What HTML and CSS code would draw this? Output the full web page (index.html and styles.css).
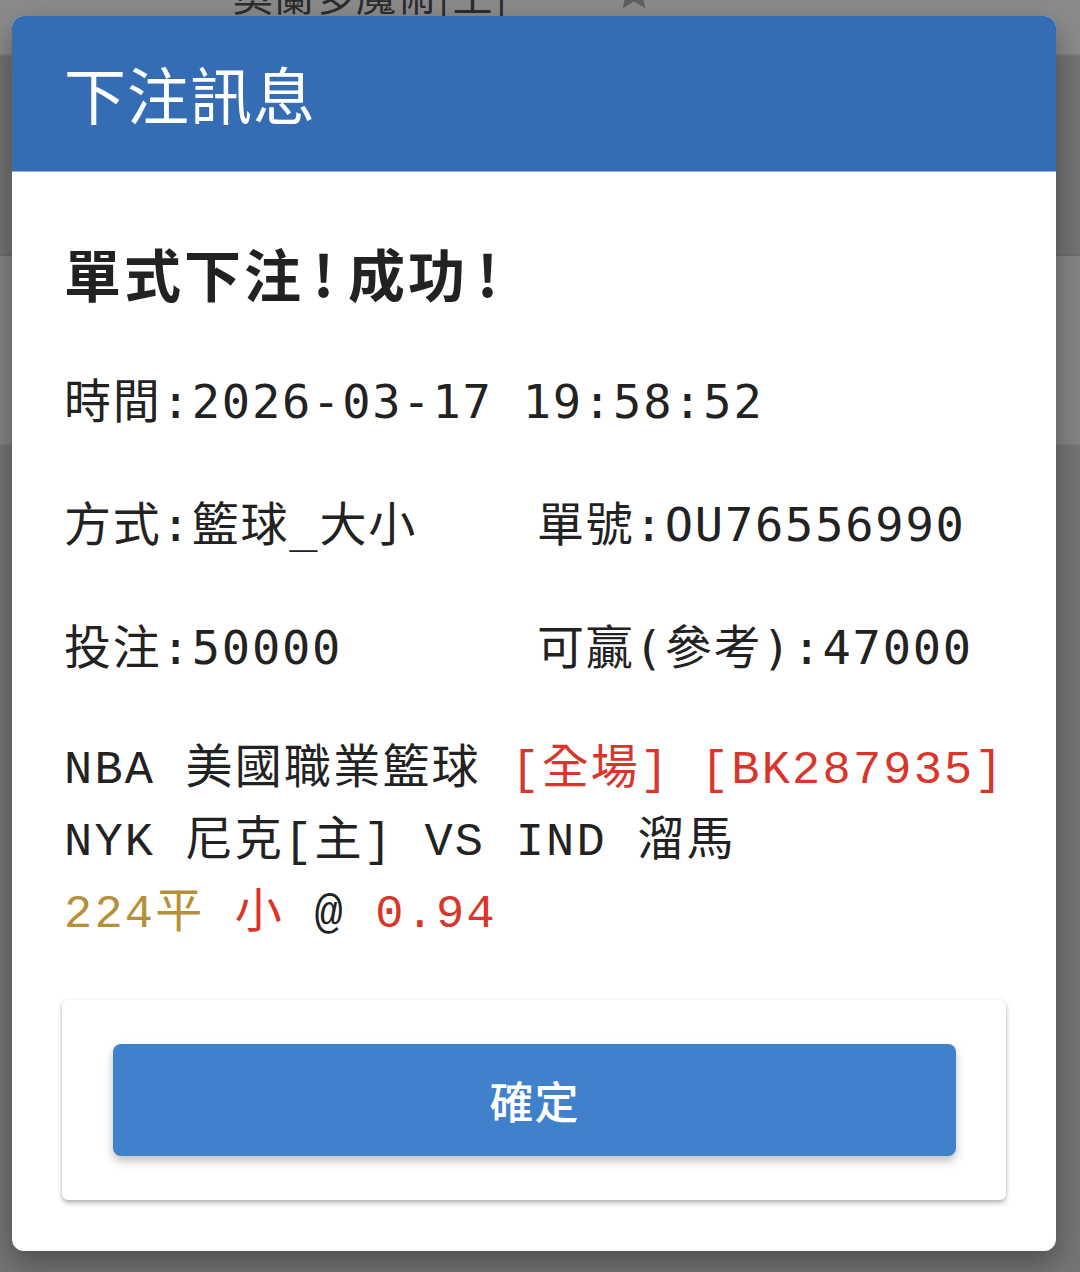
FILE: index.html
```html
<!DOCTYPE html>
<html lang="zh-Hant">
<head>
<meta charset="utf-8">
<title>下注訊息</title>
<link rel="stylesheet" href="styles.css">
</head>
<body>
<div class="page">
  <div class="bg-row r1">
    <span class="bg-team">奧蘭多魔術[主]</span>
    <svg class="bg-star" width="44" height="44" viewBox="0 0 24 24"><path d="M12 2l2.9 6.6 7.1.6-5.4 4.7 1.6 7-6.2-3.7-6.2 3.7 1.6-7L2 9.2l7.1-.6z" fill="#5f5f5f"/></svg>
  </div>
  <div class="bg-row r2"></div>
  <div class="bg-row r3"></div>
  <div class="bg-row r4"></div>
</div>

<div class="modal">
  <div class="modal-header">下注訊息</div>
  <div class="modal-body">
    <h2 class="result">單式下注<span class="bang">!</span>成功<span class="bang">!</span></h2>
    <div class="info">
      <div class="info-cell full">時間:2026-03-17 19:58:52</div>
      <div class="info-cell">方式:籃球_大小</div>
      <div class="info-cell">單號:OU76556990</div>
      <div class="info-cell">投注:50000</div>
      <div class="info-cell">可贏(參考):47000</div>
    </div>
    <div class="detail">
      <div class="line">NBA 美國職業籃球 <span class="red">[全場]</span> <span class="red">[BK287935]</span></div>
      <div class="line">NYK 尼克[主] VS IND 溜馬</div>
      <div class="line"><span class="gold">224平</span> <span class="red">小</span> @ <span class="red">0.94</span></div>
    </div>
  </div>
  <div class="card">
    <button class="confirm" type="button">確定</button>
  </div>
</div>
</body>
</html>
```

FILE: styles.css
```css
html, body {
  margin: 0;
  padding: 0;
}
body {
  width: 1080px;
  height: 1272px;
  overflow: hidden;
  background: #727272;
  font-family: "Noto Sans CJK TC", "Noto Sans", sans-serif;
  position: relative;
}

/* dimmed page behind the dialog */
.page {
  display: flex;
  flex-direction: column;
  height: 1272px;
}
.bg-row {
  flex: none;
  display: flex;
  align-items: flex-start;
}
.r1 {
  height: 54px;
  background: #8b8b8b;
  border-bottom: 2px solid #7c7c7c;
}
.r2 {
  height: 198px;
  background: #737373;
  border-bottom: 2px solid #6c6c6c;
}
.r3 {
  height: 188px;
  background: #858585;
  border-bottom: 2px solid #7a7a7a;
}
.r4 {
  flex: 1;
  background: #757575;
}
.bg-team {
  margin: -26px 0 0 233px;
  font-size: 40px;
  line-height: 40px;
  color: #2c2c2c;
  letter-spacing: 1px;
}
.bg-star {
  margin: -30px 0 0 104px;
}

/* dialog */
.modal {
  position: absolute;
  left: 12px;
  top: 16px;
  width: 1044px;
  background: #ffffff;
  border-radius: 12px;
  overflow: hidden;
  box-shadow: 0 12px 30px rgba(0, 0, 0, 0.35);
  padding-bottom: 51px;
}
.modal-header {
  height: 155px;
  border-bottom: 1px solid #8fb4e0;
  background: #346db3;
  color: #ffffff;
  font-size: 62px;
  line-height: 155px;
  padding-left: 52px;
  letter-spacing: 1px;
}
.modal-body {
  padding: 0 52px;
  color: #222222;
}
.result {
  margin: 60px 0 0 0;
  font-size: 57px;
  line-height: 80px;
  font-weight: 700;
  letter-spacing: 3px;
}
.bang {
  margin: 0 11px 0 9px;
}
.info {
  margin-top: 60px;
  display: grid;
  grid-template-columns: 473px 1fr;
  row-gap: 63px;
  font-family: "DejaVu Sans Mono", "Noto Sans CJK TC", monospace;
  font-size: 47px;
  line-height: 60px;
  letter-spacing: 1.8px;
}
.info-cell.full {
  grid-column: 1 / 3;
}
.detail {
  margin-top: 57px;
  font-family: "Liberation Mono", "Noto Sans CJK TC", monospace;
  font-size: 47px;
  line-height: 72px;
  letter-spacing: 2.2px;
  color: #222222;
  white-space: nowrap;
}
.red {
  color: #d8352b;
}
.gold {
  color: #b68f39;
}

.card {
  margin: 49px 50px 0 50px;
  padding: 44px 50px 44px 51px;
  background: #ffffff;
  border-radius: 6px;
  box-shadow: 0 3px 5px rgba(0, 0, 0, 0.28), 0 0 3px rgba(0, 0, 0, 0.08);
}
.confirm {
  display: block;
  width: 100%;
  height: 112px;
  border: none;
  border-radius: 8px;
  background: #4181cc;
  color: #ffffff;
  font-family: "Noto Sans CJK TC", sans-serif;
  font-size: 44px;
  font-weight: 500;
  letter-spacing: 1px;
  box-shadow: 0 5px 10px rgba(0, 0, 0, 0.25);
}
```
